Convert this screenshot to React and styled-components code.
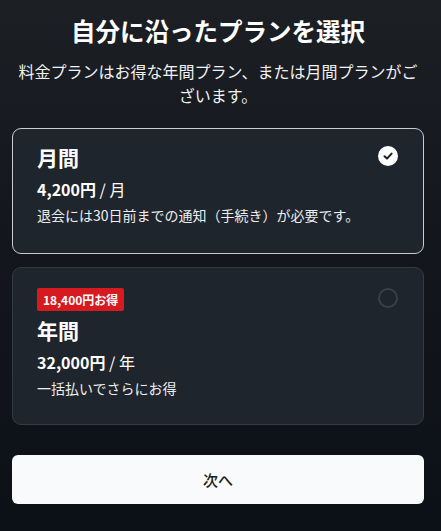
import React, { useState } from "react"
import styled, { createGlobalStyle } from "styled-components"

const GlobalStyle = createGlobalStyle`
  body {
    margin: 0;
    background: linear-gradient(180deg, #1c1f24 0%, #13171d 45%, #0c1117 100%);
    min-height: 100vh;
    font-family: "Noto Sans CJK JP", "Noto Sans", sans-serif;
    color: #fff;
  }
`

const Page = styled.div`
  padding: 15px 17px 0 12px;
  display: flex;
  flex-direction: column;
`

const Title = styled.h1`
  margin: 0;
  font-size: 24.5px;
  line-height: 32px;
  font-weight: 700;
  text-align: center;
`

const Lead = styled.p`
  margin: 12px 0 0;
  font-size: 16px;
  line-height: 24px;
  text-align: center;
  color: #f2f2f2;
`

const Plans = styled.div`
  margin-top: 21px;
  display: flex;
  flex-direction: column;
  gap: 13px;
`

const Card = styled.div`
  position: relative;
  box-sizing: border-box;
  height: ${(p) => p.$h}px;
  padding: ${(p) => p.$pt}px 24px 0;
  border-radius: 9px;
  background: #1f252c;
  border: ${(p) => (p.$active ? "1.5px solid #c9cbce" : "1px solid #343a42")};
  cursor: pointer;
`

const Badge = styled.span`
  display: inline-block;
  height: 23px;
  line-height: 23px;
  padding: 0 6px;
  border-radius: 2px;
  background: #d71a1f;
  font-size: 12px;
  font-weight: 700;
  margin-bottom: 6px;
`

const Name = styled.div`
  font-size: 21px;
  line-height: 26px;
  font-weight: 700;
`

const Price = styled.div`
  margin-top: 8px;
  font-size: 16px;
  line-height: 22px;
  font-weight: 700;
  span {
    font-weight: 400;
  }
`

const Note = styled.div`
  margin-top: 5px;
  font-size: 14px;
  line-height: 20px;
  color: #eceef0;
`

const Radio = styled.div`
  position: absolute;
  top: ${(p) => p.$top}px;
  right: 25px;
  width: 20px;
  height: 20px;
  box-sizing: border-box;
  border-radius: 50%;
  display: flex;
  align-items: center;
  justify-content: center;
  background: ${(p) => (p.$on ? "#fff" : "transparent")};
  border: ${(p) => (p.$on ? "none" : "2px solid #3b4048")};
`

const NextButton = styled.button`
  margin-top: 30px;
  height: 49px;
  border: none;
  border-radius: 6px;
  background: #f8fafb;
  color: #1a1d21;
  font-family: inherit;
  font-size: 15px;
  font-weight: 500;
  cursor: pointer;
`

const plans = [
  { id: "m", name: "月間", price: "4,200円", unit: "月", note: "退会には30日前までの通知（手続き）が必要です。", h: 126, pt: 15, rt: 17 },
  { id: "y", name: "年間", price: "32,000円", unit: "年", note: "一括払いでさらにお得", badge: "18,400円お得", h: 158, pt: 18, rt: 20 },
]

export default function App() {
  const [sel, setSel] = useState("m")
  return (
    <>
      <GlobalStyle />
      <Page>
        <Title>自分に沿ったプランを選択</Title>
        <Lead>
          料金プランはお得な年間プラン、または月間プランがございます。
        </Lead>
        <Plans>
          {plans.map((p) => (
            <Card key={p.id} $active={sel === p.id} $h={p.h} $pt={p.pt} onClick={() => setSel(p.id)}>
              {p.badge && <Badge>{p.badge}</Badge>}
              <Name>{p.name}</Name>
              <Price>
                {p.price} <span>/ {p.unit}</span>
              </Price>
              <Note>{p.note}</Note>
              <Radio $on={sel === p.id} $top={p.rt}>
                {sel === p.id && (
                  <svg width="12" height="12" viewBox="0 0 12 12">
                    <path d="M2.5 6.3 L5 8.6 L9.6 3.6" fill="none" stroke="#1b1f24" strokeWidth="2" strokeLinecap="round" strokeLinejoin="round" />
                  </svg>
                )}
              </Radio>
            </Card>
          ))}
        </Plans>
        <NextButton>次へ</NextButton>
      </Page>
    </>
  )
}
